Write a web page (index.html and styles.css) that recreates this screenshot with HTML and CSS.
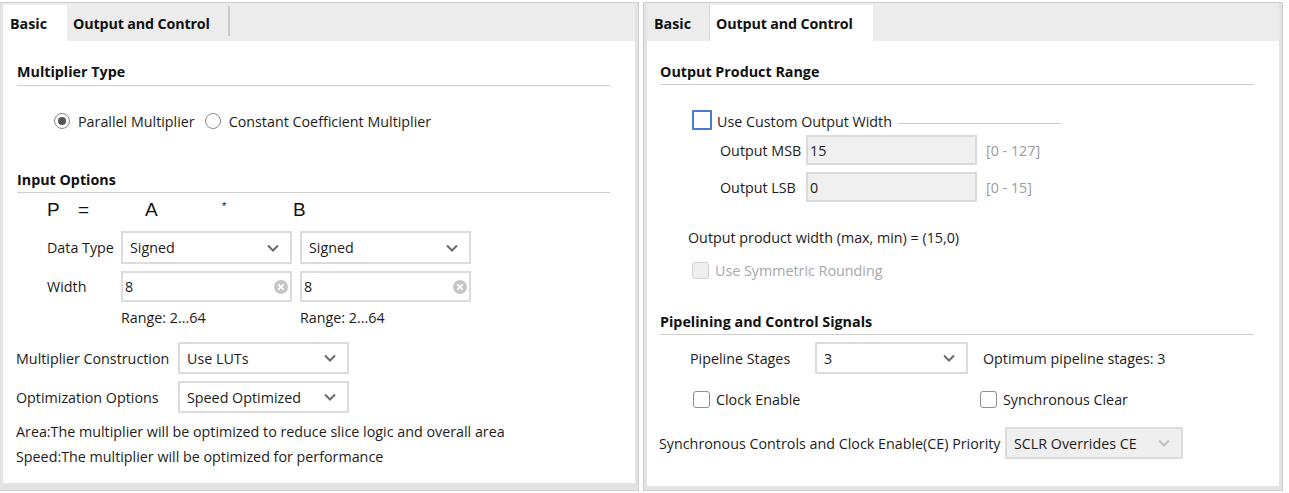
FILE: index.html
```html
<!DOCTYPE html>
<html>
<head>
<meta charset="utf-8">
<link rel="stylesheet" href="styles.css">
</head>
<body>
<div class="panels">
  <div class="panel panel-left">
    <div class="tabbar">
      <div class="tab active">Basic</div>
      <div class="tab">Output and Control</div>
      <div class="tab-sep"></div>
    </div>
    <div class="content">
      <div class="section-title">Multiplier Type</div>
      <div class="radio-row">
        <span class="radio checked"></span><span class="radio-label">Parallel Multiplier</span>
        <span class="radio second"></span><span class="radio-label">Constant Coefficient Multiplier</span>
      </div>
      <div class="section-title input-title">Input Options</div>
      <div class="formula">
        <span class="f-p">P</span><span class="f-eq">=</span><span class="f-a">A</span><span class="f-star">*</span><span class="f-b">B</span>
      </div>
      <div class="field-grid">
        <div class="glabel">Data Type</div>
        <div class="select"><span>Signed</span><svg class="chev" width="12" height="8" viewBox="0 0 12 8"><polyline points="1,1.5 6,6.5 11,1.5" fill="none" stroke="#6a6a6a" stroke-width="2"/></svg></div>
        <div class="select"><span>Signed</span><svg class="chev" width="12" height="8" viewBox="0 0 12 8"><polyline points="1,1.5 6,6.5 11,1.5" fill="none" stroke="#6a6a6a" stroke-width="2"/></svg></div>
        <div class="glabel wlabel">Width</div>
        <div class="input clearable"><span>8</span><svg class="clear" width="14" height="14" viewBox="0 0 14 14"><circle cx="7" cy="7" r="7" fill="#c6c6c6"/><path d="M4.3 4.3 L9.7 9.7 M9.7 4.3 L4.3 9.7" stroke="#fff" stroke-width="1.8"/></svg></div>
        <div class="input clearable"><span>8</span><svg class="clear" width="14" height="14" viewBox="0 0 14 14"><circle cx="7" cy="7" r="7" fill="#c6c6c6"/><path d="M4.3 4.3 L9.7 9.7 M9.7 4.3 L4.3 9.7" stroke="#fff" stroke-width="1.8"/></svg></div>
        <div></div>
        <div class="range">Range: 2...64</div>
        <div class="range">Range: 2...64</div>
      </div>
      <div class="opt-row mc-row">
        <div class="opt-label">Multiplier Construction</div>
        <div class="select opt-select"><span>Use LUTs</span><svg class="chev" width="12" height="8" viewBox="0 0 12 8"><polyline points="1,1.5 6,6.5 11,1.5" fill="none" stroke="#6a6a6a" stroke-width="2"/></svg></div>
      </div>
      <div class="opt-row oo-row">
        <div class="opt-label">Optimization Options</div>
        <div class="select opt-select"><span>Speed Optimized</span><svg class="chev" width="12" height="8" viewBox="0 0 12 8"><polyline points="1,1.5 6,6.5 11,1.5" fill="none" stroke="#6a6a6a" stroke-width="2"/></svg></div>
      </div>
      <div class="note area-note">Area:The multiplier will be optimized to reduce slice logic and overall area</div>
      <div class="note speed-note">Speed:The multiplier will be optimized for performance</div>
    </div>
  </div>

  <div class="panel panel-right">
    <div class="tabbar">
      <div class="tab inactive-first">Basic</div>
      <div class="tab active">Output and Control</div>
    </div>
    <div class="content content-right">
      <div class="section-title">Output Product Range</div>
      <div class="check-row custom-row">
        <span class="checkbox focus"></span><span class="check-label">Use Custom Output Width</span><span class="group-line"></span>
      </div>
      <div class="msb-row out-row">
        <div class="out-label">Output MSB</div>
        <div class="input disabled-input"><span>15</span></div>
        <div class="hint">[0 - 127]</div>
      </div>
      <div class="lsb-row out-row">
        <div class="out-label">Output LSB</div>
        <div class="input disabled-input"><span>0</span></div>
        <div class="hint">[0 - 15]</div>
      </div>
      <div class="product-width">Output product width (max, min) = (15,0)</div>
      <div class="check-row sym-row">
        <span class="checkbox disabled"></span><span class="check-label disabled-text">Use Symmetric Rounding</span>
      </div>
      <div class="section-title pipe-title">Pipelining and Control Signals</div>
      <div class="pipe-row">
        <div class="pipe-label">Pipeline Stages</div>
        <div class="select pipe-select"><span>3</span><svg class="chev" width="12" height="8" viewBox="0 0 12 8"><polyline points="1,1.5 6,6.5 11,1.5" fill="none" stroke="#6a6a6a" stroke-width="2"/></svg></div>
        <div class="optimum">Optimum pipeline stages: 3</div>
      </div>
      <div class="ctrl-row">
        <div class="ctrl-item first"><span class="checkbox"></span><span class="check-label">Clock Enable</span></div>
        <div class="ctrl-item"><span class="checkbox"></span><span class="check-label">Synchronous Clear</span></div>
      </div>
      <div class="prio-row">
        <div class="prio-label">Synchronous Controls and Clock Enable(CE) Priority</div>
        <div class="select disabled-select"><span>SCLR Overrides CE</span><svg class="chev" width="12" height="8" viewBox="0 0 12 8"><polyline points="1,1.5 6,6.5 11,1.5" fill="none" stroke="#c0c0c0" stroke-width="2"/></svg></div>
      </div>
    </div>
  </div>
</div>
</body>
</html>
```

FILE: styles.css
```css
* { box-sizing: border-box; }
html, body { margin: 0; padding: 0; background: #ffffff; }
body {
  font-family: "Open Sans", "Noto Sans", sans-serif;
  font-size: 14.3px;
  color: #1c1c1c;
  padding-top: 2px;
}
.panels {
  display: flex;
  gap: 4px;
  margin-left: -1px;
}
.panel {
  width: 640px;
  border: 1px solid #cdcdcd;
  background: #e3e3e3;
  padding: 0 3px 4px 3px;
  display: flex;
  flex-direction: column;
}
.tabbar {
  height: 38px;
  background: #ececec;
  padding-top: 2px;
  display: flex;
  align-items: stretch;
}
.tab {
  height: 36px;
  padding: 9px 7px 0 7px;
  line-height: 20px;
  font-weight: 700;
  color: #111;
  white-space: nowrap;
}
.tab.active { background: #ffffff; }
.panel-left .tab.active { width: 64px; }
.panel-left .tab:nth-child(2) { width: 161px; padding-left: 6px; letter-spacing: -0.15px; }
.tab-sep {
  width: 2px;
  height: 30px;
  margin-top: 1px;
  background: #c9c9c9;
}
.panel-right .tab.inactive-first { width: 63px; border-right: 1px solid #dadada; }
.panel-right .tab.active { width: 163px; padding-left: 6px; letter-spacing: -0.15px; }

.content {
  background: #ffffff;
  height: 442px;
  padding: 21px 25px 0 14px;
}
.content-right { height: 445px; padding-left: 13px; }

.section-title {
  font-weight: 700;
  line-height: 20px;
  padding-bottom: 3px;
  border-bottom: 1px solid #cfcfcf;
  color: #111;
}
.content-right .section-title { padding-bottom: 2px; }

.radio-row {
  display: flex;
  align-items: center;
  height: 20px;
  margin-top: 25px;
  margin-left: 37px;
}
.radio {
  width: 16px;
  height: 16px;
  border: 1px solid #8a8a8a;
  border-radius: 50%;
  background: #fff;
  flex: none;
  position: relative;
}
.radio.checked::after {
  content: "";
  position: absolute;
  left: 3px;
  top: 3px;
  width: 8px;
  height: 8px;
  border-radius: 50%;
  background: #555555;
}
.radio.second { margin-left: 10px; }
.radio-label { margin-left: 8px; white-space: nowrap; }

.input-title { margin-top: 39px; padding-bottom: 2px; }

.formula {
  font-family: "Liberation Sans", Arial, sans-serif;
  font-size: 19px;
  line-height: 22px;
  margin-top: 6px;
  margin-left: 30px;
  display: flex;
  color: #111;
}
.f-p { width: 31px; }
.f-eq { width: 67px; }
.f-a { width: 77px; }
.f-star { width: 71px; font-size: 11px; line-height: 14px; }

.field-grid {
  display: grid;
  grid-template-columns: 66px 171px 171px;
  column-gap: 8px;
  margin-left: 30px;
  margin-top: 10px;
  align-items: center;
}
.field-grid .select { height: 33px; }
.field-grid .input { height: 31px; margin-top: 7px; }
.glabel { white-space: nowrap; }
.wlabel { margin-top: 7px; }
.range { margin-top: 6px; line-height: 20px; }

.select, .input {
  border: 2px solid #dcdcdc;
  background: #fff;
  display: flex;
  align-items: center;
  position: relative;
  white-space: nowrap;
}
.select { padding-left: 7px; }
.select .chev { position: absolute; right: 11px; top: 50%; margin-top: -4px; }
.input { padding-left: 2px; }
.input .clear { position: absolute; right: 2px; top: 50%; margin-top: -7px; }

.opt-row {
  display: flex;
  align-items: center;
  margin-left: -1px;
}
.mc-row { margin-top: 14px; }
.oo-row { margin-top: 7px; }
.opt-label { width: 162px; white-space: nowrap; }
.opt-select { width: 171px; height: 32px; }

.note { margin-left: -1px; line-height: 20px; white-space: nowrap; }
.area-note { margin-top: 9px; }
.speed-note { margin-top: 5px; }

/* right panel */
.check-row {
  display: flex;
  align-items: center;
  height: 20px;
}
.custom-row { margin-top: 26px; margin-left: 32px; align-items: flex-start; }
.custom-row .check-label { line-height: 20px; margin-left: 5px; margin-top: 1px; }
.checkbox {
  width: 17px;
  height: 17px;
  border: 1px solid #8f8f8f;
  border-radius: 3px;
  background: #fff;
  flex: none;
}
.checkbox.focus {
  width: 20px;
  height: 20px;
  border: 2px solid #4b7bcf;
  border-radius: 1px;
  margin-top: -1px;
}
.checkbox.disabled {
  background: #efefef;
  border-color: #d2d2d2;
}
.check-label { margin-left: 6px; white-space: nowrap; }
.group-line {
  width: 163px;
  height: 1px;
  background: #cfcfcf;
  margin-left: 6px;
  margin-top: 12px;
}
.disabled-text { color: #a8a8a8; }

.out-row {
  display: flex;
  align-items: center;
  margin-left: 60px;
}
.msb-row { margin-top: 4px; }
.lsb-row { margin-top: 7px; }
.out-label { width: 86px; white-space: nowrap; }
.disabled-input {
  width: 171px;
  height: 30px;
  background: #f0f0f0;
  border-color: #dadada;
}
.hint { margin-left: 9px; color: #9b9b9b; }

.product-width { margin-top: 26px; margin-left: 28px; line-height: 20px; }
.sym-row { margin-top: 12px; margin-left: 32px; }

.pipe-title { margin-top: 32px; }
.pipe-row {
  display: flex;
  align-items: center;
  margin-top: 7px;
  margin-left: 30px;
}
.pipe-label { width: 125px; white-space: nowrap; }
.pipe-select { width: 153px; height: 32px; }
.optimum { margin-left: 15px; white-space: nowrap; }

.ctrl-row {
  display: flex;
  align-items: center;
  height: 20px;
  margin-top: 15px;
  margin-left: 33px;
}
.ctrl-item { display: flex; align-items: center; }
.ctrl-item.first { width: 287px; }

.prio-row {
  display: flex;
  align-items: center;
  margin-top: 18px;
  margin-left: -1px;
}
.prio-label { width: 346px; white-space: nowrap; }
.disabled-select {
  width: 178px;
  height: 32px;
  background: #efefef;
  border-color: #dcdcdc;
}
```
